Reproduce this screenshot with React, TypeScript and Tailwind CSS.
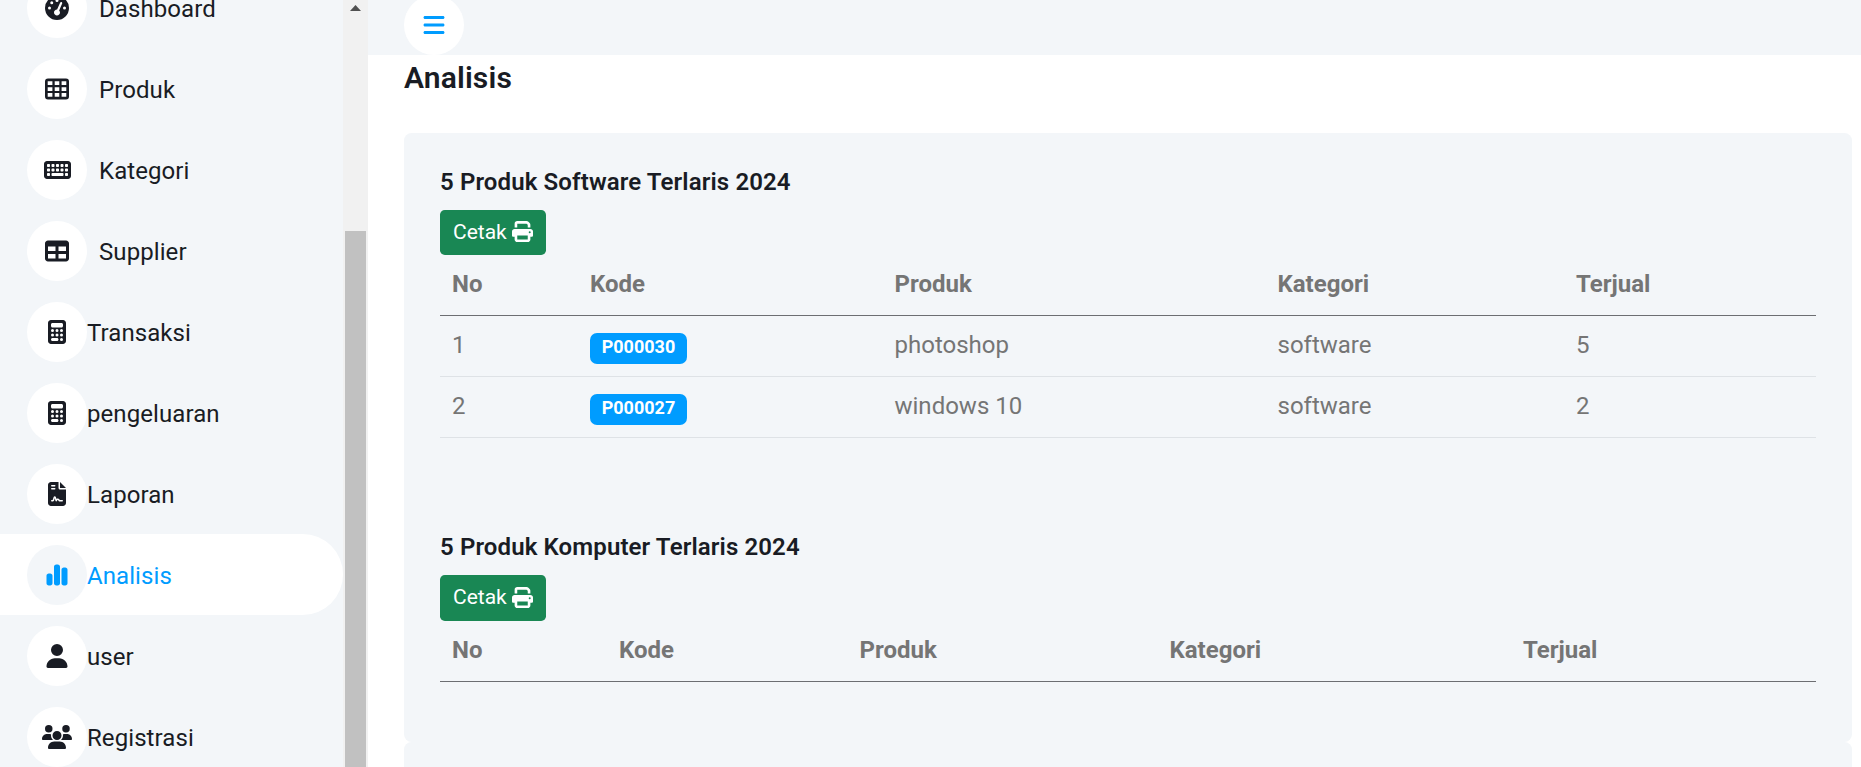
import type { ReactNode } from "react";
import {
  FaBars,
  FaCalculator,
  FaChartSimple,
  FaFileContract,
  FaGaugeHigh,
  FaKeyboard,
  FaPrint,
  FaTable,
  FaUser,
  FaUsers,
} from "react-icons/fa6";

type NavEntry = { label: string; icon: ReactNode; spaced?: boolean; active?: boolean };

function GridIcon() {
  return (
    <svg className="h-[22px] w-6" viewBox="0 0 24 22" fill="currentColor">
      <path
        fillRule="evenodd"
        d="M3 .5H21A3 3 0 0 1 24 3.5V18.5A3 3 0 0 1 21 21.5H3A3 3 0 0 1 0 18.5V3.5A3 3 0 0 1 3 .5ZM2.7 3.3V7H7.4V3.3ZM9.7 3.3V7H14.3V3.3ZM16.6 3.3V7H21.3V3.3ZM2.7 9.2V12.9H7.4V9.2ZM9.7 9.2V12.9H14.3V9.2ZM16.6 9.2V12.9H21.3V9.2ZM2.7 15.1V18.8H7.4V15.1ZM9.7 15.1V18.8H14.3V15.1ZM16.6 15.1V18.8H21.3V15.1Z"
      />
    </svg>
  );
}

const navEntries: NavEntry[] = [
  { label: "Dashboard", icon: <FaGaugeHigh className="size-6" />, spaced: true },
  { label: "Produk", icon: <GridIcon />, spaced: true },
  { label: "Kategori", icon: <FaKeyboard className="h-6 w-[27px]" />, spaced: true },
  { label: "Supplier", icon: <FaTable className="size-6" />, spaced: true },
  { label: "Transaksi", icon: <FaCalculator className="size-6" /> },
  { label: "pengeluaran", icon: <FaCalculator className="size-6" /> },
  { label: "Laporan", icon: <FaFileContract className="size-6" /> },
  { label: "Analisis", icon: <FaChartSimple className="size-6" />, active: true },
  { label: "user", icon: <FaUser className="size-6" /> },
  { label: "Registrasi", icon: <FaUsers className="h-6 w-[30px]" /> },
];

function NavItem({ label, icon, spaced, active }: NavEntry) {
  return (
    <a
      className={`flex h-[81px] shrink-0 items-center rounded-r-[40.5px] pl-[27px] ${
        active ? "bg-white text-[#009cff]" : "text-[#191c24]"
      }`}
    >
      <span
        className={`flex size-[60px] items-center justify-center rounded-full ${
          active ? "bg-[#f3f6f9]" : "bg-white"
        } ${spaced ? "mr-3" : ""}`}
      >
        {icon}
      </span>
      <span className="pt-0.5 tracking-[0.08px]">{label}</span>
    </a>
  );
}

function Sidebar() {
  return (
    <aside className="flex w-[368px] shrink-0 bg-[#f3f6f9]">
      <nav className="-mt-[33px] flex w-[343px] flex-col">
        {navEntries.map((entry) => (
          <NavItem key={entry.label} {...entry} />
        ))}
      </nav>
      <div className="flex w-[25px] flex-col items-center bg-[#f1f1f1]">
        <svg className="mt-[5px] h-[6px] w-[11px] shrink-0" viewBox="0 0 11 6">
          <path d="M5.5 0 11 6H0Z" fill="#505050" />
        </svg>
        <div className="mt-[220px] mr-px w-[21px] grow bg-[#c1c1c1]" />
      </div>
    </aside>
  );
}

const headings = ["No", "Kode", "Produk", "Kategori", "Terjual"];

type Sale = { code: string; product: string; category: string; sold: number };

const softwareSales: Sale[] = [
  { code: "P000030", product: "photoshop", category: "software", sold: 5 },
  { code: "P000027", product: "windows 10", category: "software", sold: 2 },
];

function Row({ columns, className, cells }: { columns: string; className: string; cells: ReactNode[] }) {
  return (
    <div className={`grid h-[61px] border-b ${columns} ${className}`}>
      {cells.map((cell, index) => (
        <div key={index} className="px-3 pt-[11px]">
          {cell}
        </div>
      ))}
    </div>
  );
}

function SalesSection({ title, columns, sales }: { title: string; columns: string; sales: Sale[] }) {
  return (
    <section>
      <h6 className="-mt-px mb-[13px] leading-[29px] font-semibold tracking-[0.12px] text-[#191c24]">{title}</h6>
      <button className="flex h-[45.4px] items-center rounded-[4.8px] bg-[#198754] px-[13px] pb-[2px] text-[21px] text-white">
        Cetak
        <FaPrint className="ml-[5px] size-[21px]" />
      </button>
      <Row columns={columns} className="border-[#6c6e72] font-bold" cells={headings} />
      {sales.map((sale, index) => (
        <Row
          key={sale.code}
          columns={columns}
          className="border-[#dee2e6]"
          cells={[
            index + 1,
            <span className="inline-block rounded-[7px] bg-[#009cff] px-[11.7px] pt-[5px] pb-[8px] text-[18px] leading-none font-bold text-white">
              {sale.code}
            </span>,
            sale.product,
            sale.category,
            sale.sold,
          ]}
        />
      ))}
    </section>
  );
}

export default function App() {
  return (
    <div className="flex h-[767px] w-[1861px] overflow-hidden bg-white font-['Roboto',sans-serif] text-[24px] leading-[36px] text-[#757575]">
      <Sidebar />
      <main className="flex min-w-0 grow flex-col">
        <header className="flex h-[55px] shrink-0 items-end bg-[#f3f6f9] pl-9">
          <button className="flex size-[60px] shrink-0 items-center justify-center rounded-full bg-white text-[#009cff]">
            <FaBars className="size-6" />
          </button>
        </header>
        <div className="flex flex-col pt-[5px] pr-[9px] pl-9">
          <h5 className="mb-[37px] text-[30px] leading-[36px] font-semibold tracking-[0.15px] text-[#191c24]">Analisis</h5>
          <div className="flex h-[609px] shrink-0 flex-col gap-24 rounded-[7.5px] bg-[#f3f6f9] p-9">
            <SalesSection
              title="5 Produk Software Terlaris 2024"
              columns="grid-cols-[138px_304.5px_383px_298.5px_252px]"
              sales={softwareSales}
            />
            <SalesSection
              title="5 Produk Komputer Terlaris 2024"
              columns="grid-cols-[167px_240.5px_310px_353.5px_305px]"
              sales={[]}
            />
          </div>
          <div className="h-[120px] shrink-0 rounded-[7.5px] bg-[#f3f6f9]" />
        </div>
      </main>
    </div>
  );
}
